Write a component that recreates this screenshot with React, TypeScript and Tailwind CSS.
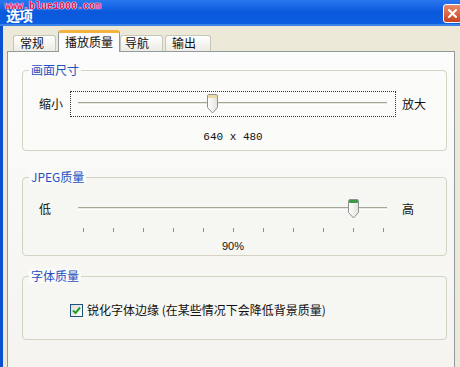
const cjk = "font-['SimSun','Noto_Sans_CJK_SC','Liberation_Sans',sans-serif]";

function Thumb({ band }: { band: string }) {
  return (
    <svg width="11" height="20" viewBox="0 0 11 20" className="block">
      <defs>
        <linearGradient id={`tg${band}`} x1="0" y1="0" x2="1" y2="0">
          <stop offset="0" stopColor="#ffffff" />
          <stop offset="1" stopColor="#e3e3da" />
        </linearGradient>
      </defs>
      <path
        d="M0.5 2 Q0.5 0.5 2 0.5 H9 Q10.5 0.5 10.5 2 V13.5 L5.5 19 L0.5 13.5 Z"
        fill={`url(#tg${band})`}
        stroke="#8d9191"
      />
      <rect x="1" y="1" width="9" height="3" rx="1" fill={band} />
    </svg>
  );
}

function Slider({ pos, band, ticks, focused }: { pos: number; band: string; ticks?: boolean; focused?: boolean }) {
  return (
    <div
      className={`relative w-[326px] h-[26px] ${focused ? "border border-dotted border-[#333]" : "border border-transparent"}`}
    >
      <div className="absolute left-[7px] right-[8px] top-[10px] h-[3px] border-t border-[#a4a497] bg-[#e8e8e0] border-b border-b-white" />
      <div className="absolute top-[2px]" style={{ left: pos - 5 }}>
        <Thumb band={band} />
      </div>
      {ticks && (
        <div className="absolute top-[31px] left-0 w-full">
          {Array.from({ length: 11 }).map((_, i) => (
            <div key={i} className="absolute w-px h-[4px] bg-[#8f8f86]" style={{ left: 12 + i * 30 }} />
          ))}
        </div>
      )}
    </div>
  );
}

function Group({ title, className, children }: { title: string; className: string; children: React.ReactNode }) {
  return (
    <div className={`relative ml-[14px] w-[425px] rounded-[4px] border border-[#d3d2c3] ${className}`}>
      <div className={`absolute -top-[8px] left-[6px] px-[2px] bg-[#fbfbf9] text-[12px] leading-[14px] text-[#1e50c0] ${cjk}`}>
        {title}
      </div>
      {children}
    </div>
  );
}

export default function App() {
  return (
    <div className={`w-[460px] h-[367px] overflow-hidden bg-[#ece9d8] flex flex-col ${cjk}`}>
      <div className="relative h-[26px] shrink-0 bg-gradient-to-b from-[#2a78f0] via-[#0a58dc] to-[#0d5fe2] border-b-2 border-[#3d82e8]">
        <div className="absolute left-[6px] top-[8px] text-[14px] leading-[14px] font-bold text-white tracking-[-1px]">选项</div>
        <div className="absolute left-[5px] top-[1px] font-['Liberation_Mono',monospace] text-[10px] leading-[12px] font-bold text-[#e0124a] [text-shadow:0_0_1px_#fff,0_0_1px_#fff,0_0_1px_#fff]">
          www.blue1000.com
        </div>
        <div className="absolute right-[-2px] top-[4px] w-[19px] h-[19px] rounded-[3px] border border-white bg-gradient-to-b from-[#e88a6a] to-[#c8401e] flex items-center justify-center">
          <svg width="11" height="11" viewBox="0 0 11 11">
            <path d="M2 2 L9 9 M9 2 L2 9" stroke="#fff" strokeWidth="2" strokeLinecap="round" />
          </svg>
        </div>
      </div>
      <div className="flex-1 flex flex-col border-l-[3px] border-[#0b50d0]">
        <div className="flex items-end h-[25px] pl-[7px] pt-[4px]">
          <div className="h-[16px] w-[43px] ml-[3px] border border-b-0 border-[#c6c6bb] rounded-t-[3px] bg-gradient-to-b from-white to-[#ecebe5] text-[12px] leading-[14px] text-[#111] pl-[6px]">常规</div>
          <div className="relative z-10 mb-[-1px] h-[22px] w-[62px] ml-[2px] border border-b-0 border-[#919b9c] border-t-[3px] border-t-[#f4b33f] rounded-t-[3px] bg-[#fcfcfe] text-[12px] leading-[14px] text-[#111] pl-[6px] pt-[2px]">播放质量</div>
          <div className="h-[16px] w-[43px] border border-b-0 border-[#c6c6bb] rounded-t-[3px] bg-gradient-to-b from-white to-[#ecebe5] text-[12px] leading-[14px] text-[#111] pl-[4px]">导航</div>
          <div className="h-[16px] w-[46px] ml-[2px] border border-b-0 border-[#c6c6bb] rounded-t-[3px] bg-gradient-to-b from-white to-[#ecebe5] text-[12px] leading-[14px] text-[#111] pl-[6px]">输出</div>
        </div>
        <div className="ml-[4px] w-[448px] h-[340px] shrink-0 border border-[#919b9c] bg-gradient-to-b from-[#fcfcfc] to-[#f4f3ee] pt-[18px]">
          <Group title="画面尺寸" className="h-[81px] bg-[#fbfbf9]">
            <div className="flex items-center pl-[16px] pt-[20px]">
              <div className="w-[31px] text-[12px] leading-[14px] text-[#111]">缩小</div>
              <Slider pos={141} band="#ecd9a0" focused />
              <div className="ml-[6px] text-[12px] leading-[14px] text-[#111]">放大</div>
            </div>
            <div className="pl-[47px] w-[373px] mt-[14px] text-center text-[11px] leading-[12px] text-[#111] font-['Liberation_Mono',monospace]">
              640 x 480
            </div>
          </Group>
          <Group title="JPEG质量" className="mt-[26px] h-[79px] bg-[#f6f6f3]">
            <div className="flex items-center pl-[16px] pt-[18px]">
              <div className="w-[31px] text-[12px] leading-[14px] text-[#111]">低</div>
              <Slider pos={282} band="#3c9a46" ticks />
              <div className="ml-[6px] text-[12px] leading-[14px] text-[#111]">高</div>
            </div>
            <div className="pl-[47px] w-[373px] mt-[18px] text-center text-[11px] leading-[12px] text-[#111] font-['Liberation_Sans',sans-serif]">
              90%
            </div>
          </Group>
          <Group title="字体质量" className="mt-[20px] h-[64px] bg-[#f6f6f2]">
            <div className="flex items-center pl-[47px] pt-[26px]">
              <div className="w-[13px] h-[13px] border border-[#1c5180] bg-gradient-to-br from-[#dcdcd6] to-white flex items-center justify-center">
                <svg width="9" height="9" viewBox="0 0 9 9">
                  <path d="M1 4.5 L3.5 7 L8 1.5" stroke="#21a121" strokeWidth="2" fill="none" />
                </svg>
              </div>
              <div className="ml-[4px] text-[12px] leading-[14px] text-[#111]">锐化字体边缘 (在某些情况下会降低背景质量)</div>
            </div>
          </Group>
        </div>
      </div>
    </div>
  );
}
